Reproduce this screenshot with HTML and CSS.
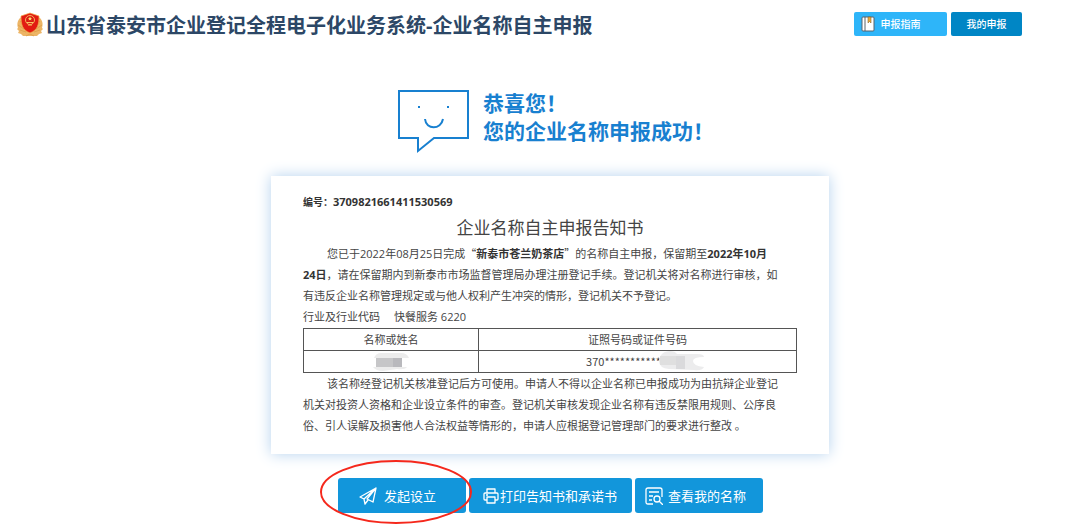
FILE: index.html
```html
<!DOCTYPE html>
<html lang="zh-CN">
<head>
    <meta charset="UTF-8">
    <title>企业名称自主申报</title>
    <link rel="stylesheet" href="styles.css">
</head>
<body>
<header class="header">
    <svg class="emblem" viewBox="0 0 26 26" aria-hidden="true">
        <path d="M3 6C0 9 0 13 1 16L0 17L2 19L1 21L4 22L6 24H20L22 22L25 21L24 19L26 17L25 16C26 13 26 9 23 6L19 4H7Z" fill="#edb566"/>
        <path d="M3 9L7 14M1 13L7 17M3 18L9 20M23 9L19 14M25 13L19 17M23 18L17 20M9 24L13 22L17 24" stroke="#d99a45" stroke-width=".7" fill="none"/>
        <path d="M13 1L16 2L22 4C22 12 21 18 13 21C5 18 4 12 4 4L10 2Z" fill="#e21b12" stroke="#f3b04c" stroke-width=".7"/>
        <circle cx="13" cy="8" r="4.5" fill="#d91a10" stroke="#f7c261" stroke-width=".9"/>
        <path d="M13 4.5L13.7 6H15L14 7L14.4 8.5L13 7.7L11.6 8.5L12 7L11 6H12.3Z" fill="#ffdc6b"/>
        <path d="M10 10.5H16M11 13H15" stroke="#f7c261"/>
    </svg>
    <h1 class="site-title">山东省泰安市企业登记全程电子化业务系统-企业名称自主申报</h1>
    <nav class="nav">
        <a class="nav-link guide" href="#">
            <svg class="book" viewBox="0 0 14 16" aria-hidden="true">
                <rect x="1" y="1" width="12" height="14" rx="1" fill="#fff" stroke="#59636b"/>
                <path d="M4 1V15" stroke="#59636b"/>
                <path d="M7 1H10V7L8.5 5.5L7 7Z" fill="#f0aa36" stroke="#8b6834" stroke-width=".6"/>
            </svg>
            申报指南
        </a>
        <a class="nav-link mine" href="#">我的申报</a>
    </nav>
</header>

<main class="main">
    <section class="success">
        <svg class="smile" viewBox="0 0 72 66" aria-hidden="true">
            <path d="M1 2H70V49H36L20 62V49H1Z"/>
            <path d="M27 30C28 41 43 41 45 30"/>
            <path d="M20 18H22M49 18H51"/>
        </svg>
        <p class="success-text">恭喜您！<br>您的企业名称申报成功！</p>
    </section>

    <article class="card">
        <p class="number"><b>编号：</b><b class="digits">3709821661411530569</b></p>
        <h2 class="card-title">企业名称自主申报告知书</h2>
        <p class="indent">您已于2022年08月25日完成<span class="quote">“</span><b>新泰市苍兰奶茶店</b><span class="quote">”</span>的名称自主申报，保留期至<b>2022年10月<br>24日</b>，请在保留期内到新泰市市场监督管理局办理注册登记手续。登记机关将对名称进行审核，如<br>有违反企业名称管理规定或与他人权利产生冲突的情形，登记机关不予登记。</p>
        <p class="industry"><span>行业及行业代码</span><span>快餐服务 6220</span></p>
        <table class="table">
            <thead>
            <tr>
                <th class="col-name">名称或姓名</th>
                <th>证照号码或证件号码</th>
            </tr>
            </thead>
            <tbody>
            <tr>
                <td>
                    <svg class="mask" viewBox="0 0 36 18" aria-hidden="true">
                        <path d="M1 5Q3 0 8 0H28Q34 0 36 5ZM0 14H34Q32 17 24 16L10 18Q3 18 0 14Z" fill="#ececec"/>
                        <path d="M3 5H29V14H3Z" fill="#c6c6c8"/>
                        <path d="M20 5H29V14H20Z" fill="#b9b9bd"/>
                    </svg>
                </td>
                <td>
                    <span class="code">370***********
                        <svg class="code-mask" viewBox="0 0 46 20" aria-hidden="true">
                            <path d="M0 10C0 4 5 0 11 0Q16 0 18 3H38Q45 3 45 6Q34 6 34 10Q34 15 45 16Q43 20 35 19L10 18Q0 17 0 10Z" fill="#ececed"/>
                            <path d="M1 5H9V14H1ZM9 5H17V14H9Z" fill="#dfdfdf"/>
                            <path d="M17 5H26V18H17Z" fill="#dadadc"/>
                        </svg>
                    </span>
                </td>
            </tr>
            </tbody>
        </table>
        <p class="indent">该名称经登记机关核准登记后方可使用。申请人不得以企业名称已申报成功为由抗辩企业登记<br>机关对投资人资格和企业设立条件的审查。登记机关审核发现企业名称有违反禁限用规则、公序良<br>俗、引人误解及损害他人合法权益等情形的，申请人应根据登记管理部门的要求进行整改 。</p>
    </article>

    <div class="actions">
        <div class="marked">
            <button type="button" class="btn btn-start">
                <svg class="icon" viewBox="0 0 18 18" aria-hidden="true">
                    <path d="M17 1L1 10L5 12L17 1L14 15L8 12L17 1M5 12L6 17L9 13"/>
                </svg>
                发起设立
            </button>
            <svg class="ring" viewBox="0 0 152 64" aria-hidden="true">
                <ellipse cx="76" cy="32" rx="75" ry="31"/>
            </svg>
        </div>
        <button type="button" class="btn btn-print">
            <svg class="icon icon-print" viewBox="0 0 16 16" aria-hidden="true">
                <path d="M4 5V1H12V5M4 12H2Q1 12 1 11V6Q1 5 2 5H14Q15 5 15 6V11Q15 12 14 12H12M4 9H12V15H4ZM3 7H5"/>
            </svg>
            打印告知书和承诺书
        </button>
        <button type="button" class="btn btn-view">
            <svg class="icon" viewBox="0 0 18 18" aria-hidden="true">
                <path d="M8 17H3Q1 17 1 15V3Q1 1 3 1H15Q17 1 17 3V10M4 5H14M4 9H8M4 13H7"/>
                <circle cx="12" cy="12" r="3"/>
                <path d="M14 14L18 18"/>
            </svg>
            查看我的名称
        </button>
    </div>
</main>
</body>
</html>
```
FILE: styles.css
```css
* {
    box-sizing: border-box;
}
body {
    margin: 0;
    background: #fff;
    color: #444;
    font-family: "Open Sans", "Noto Sans CJK SC", sans-serif;
    font-size: 11px;
    line-height: 21px;
}
h1, h2, p {
    margin: 0;
}
.header {
    display: flex;
    align-items: flex-start;
    padding: 12px 58px 0 17px;
}
.emblem {
    width: 26px;
    height: 26px;
    margin-right: 3px;
}
.site-title {
    color: #2c4766;
    font-size: 20px;
    line-height: 28px;
    white-space: nowrap;
}
.nav {
    display: flex;
    gap: 4px;
    margin-left: auto;
}
.nav-link {
    display: flex;
    align-items: center;
    justify-content: center;
    height: 24px;
    border-radius: 2px;
    color: #fff;
    font-size: 10px;
    font-weight: 500;
    text-decoration: none;
}
.guide {
    gap: 6px;
    width: 93px;
    padding-right: 20px;
    background: #2eb5f9;
}
.mine {
    width: 71px;
    background: #0086c5;
}
.book {
    width: 14px;
    height: 16px;
}
.main {
    padding: 0 0 11px 20px;
}
.success {
    display: flex;
    justify-content: center;
    gap: 13px;
    padding: 49px 0 0 12px;
}
.smile {
    width: 72px;
    height: 66px;
    fill: none;
    stroke: #1880d0;
    stroke-width: 2;
}
.success-text {
    color: #1880d0;
    font-size: 21px;
    font-weight: bold;
    line-height: 28px;
}
.card {
    width: 558px;
    max-width: 100%;
    margin: 21px auto 24px;
    padding: 15px 32px 18px;
    box-shadow: 0 0 14px #b5d2ee;
}
.number {
    color: #333;
    font-size: 10px;
}
.digits {
    font-size: 11px;
}
.card-title {
    color: #444;
    font-size: 17px;
    font-weight: normal;
    line-height: 30px;
    text-align: center;
}
.indent {
    text-indent: 24px;
    white-space: nowrap;
}
.indent b {
    color: #333;
}
.quote, .code {
    font-family: "Noto Sans CJK SC", sans-serif;
}
.industry {
    display: flex;
    gap: 14px;
    line-height: 22px;
}
.table {
    width: 100%;
    border-collapse: collapse;
    table-layout: fixed;
}
.table th, .table td {
    height: 22px;
    padding: 0;
    border: 1px solid #555;
    font-weight: normal;
    text-align: center;
}
.table .col-name {
    width: 175px;
}
.mask {
    display: block;
    width: 36px;
    height: 18px;
    margin: 0 auto;
}
.code {
    position: relative;
    padding-right: 28px;
}
.code-mask {
    position: absolute;
    top: -2px;
    right: -16px;
    width: 46px;
    height: 20px;
}
.actions {
    display: flex;
    justify-content: center;
    gap: 3px;
}
.marked {
    position: relative;
}
.ring {
    position: absolute;
    top: -18px;
    left: -18px;
    width: 152px;
    height: 64px;
    fill: none;
    stroke: #f5281c;
    stroke-width: 2;
    pointer-events: none;
}
.btn {
    display: flex;
    align-items: center;
    justify-content: center;
    height: 35px;
    padding: 0;
    border: none;
    border-radius: 3px;
    background: #1296db;
    color: #fff;
    font-family: inherit;
    font-size: 13px;
    white-space: nowrap;
    cursor: pointer;
}
.btn-start {
    gap: 7px;
    width: 128px;
    padding-right: 8px;
}
.btn-print {
    gap: 1px;
    width: 163px;
}
.btn-view {
    gap: 5px;
    width: 128px;
    padding-right: 6px;
}
.icon {
    width: 18px;
    height: 18px;
    fill: none;
    stroke: #fff;
    stroke-width: 1.3;
    stroke-linejoin: round;
}
.icon-print {
    width: 16px;
    height: 16px;
}
```
